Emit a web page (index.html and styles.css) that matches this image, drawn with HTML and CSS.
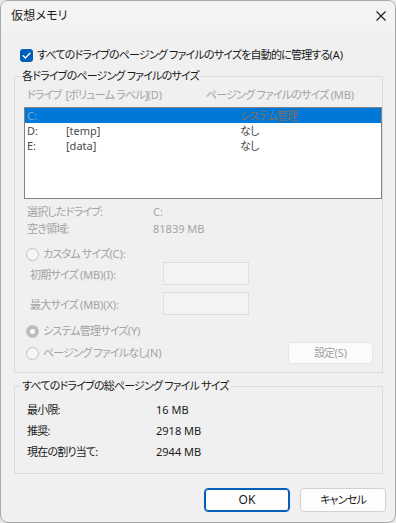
FILE: index.html
```html
<!DOCTYPE html>
<html lang="ja">
<head>
<meta charset="utf-8">
<link rel="stylesheet" href="styles.css">
</head>
<body>
<div class="window">
  <div class="titlebar">
    <span class="title">仮想メモリ</span>
    <span class="close">
      <svg width="10" height="10" viewBox="0 0 10 10"><path d="M0.5 0.5 L9.5 9.5 M9.5 0.5 L0.5 9.5" stroke="#1a1a1a" stroke-width="1.1" fill="none"/></svg>
    </span>
  </div>
  <div class="content">
    <div class="check-row">
      <span class="checkbox"><svg width="13" height="13" viewBox="0 0 13 13"><path d="M3.2 6.8 L5.4 9 L9.9 4.3" stroke="#fff" stroke-width="1.3" fill="none" stroke-linecap="round" stroke-linejoin="round"/></svg></span>
      <span>すべてのドライブのページング ファイルのサイズを自動的に管理する<span class="lat">(A)</span></span>
    </div>

    <fieldset class="group group1">
      <legend>各ドライブのページング ファイルのサイズ</legend>
      <div class="list-head">
        <span class="col1">ドライブ&nbsp;&nbsp;[ボリューム ラベル]<span class="lat">(D)</span></span>
        <span class="col3">ページング ファイルのサイズ <span class="lat">(MB)</span></span>
      </div>
      <div class="listbox">
        <div class="lrow selected"><span class="c1">C:</span><span class="c2"></span><span class="c3">システム管理</span></div>
        <div class="lrow"><span class="c1">D:</span><span class="c2 val">[temp]</span><span class="c3">なし</span></div>
        <div class="lrow"><span class="c1">E:</span><span class="c2 val">[data]</span><span class="c3">なし</span></div>
      </div>
      <div class="info">
        <div class="irow first"><span class="ilabel">選択したドライブ:</span><span class="val">C:</span></div>
        <div class="irow"><span class="ilabel">空き領域:</span><span class="val">81839 MB</span></div>
      </div>
      <div class="radio-row custom"><span class="radio"></span><span>カスタム サイズ<span class="lat">(C):</span></span></div>
      <div class="field-row first"><span class="flabel">初期サイズ <span class="lat">(MB)(I):</span></span><span class="input"></span></div>
      <div class="field-row"><span class="flabel">最大サイズ <span class="lat">(MB)(X):</span></span><span class="input"></span></div>
      <div class="radio-row sys"><span class="radio on"></span><span>システム管理サイズ<span class="lat">(Y)</span></span></div>
      <div class="radio-row none">
        <span class="radio"></span><span>ページング ファイルなし<span class="lat">(N)</span></span>
        <span class="btn set">設定<span class="lat">(S)</span></span>
      </div>
    </fieldset>

    <fieldset class="group group2">
      <legend>すべてのドライブの総ページング ファイル サイズ</legend>
      <div class="trow"><span class="tlabel">最小限:</span><span class="val">16 MB</span></div>
      <div class="trow"><span class="tlabel">推奨:</span><span class="val">2918 MB</span></div>
      <div class="trow"><span class="tlabel">現在の割り当て:</span><span class="val">2944 MB</span></div>
    </fieldset>

    <div class="buttons">
      <span class="btn ok val">OK</span>
      <span class="btn cancel">キャンセル</span>
    </div>
  </div>
</div>
</body>
</html>
```
FILE: styles.css
```css
* { box-sizing: border-box; }
html, body { margin: 0; padding: 0; background: #e8e8e8; }
body {
  font-family: "Noto Sans", "Noto Sans CJK JP", sans-serif;
  font-size: 11px;
  font-feature-settings: "palt";
  letter-spacing: -0.8px;
  color: #1a1a1a;
}
.val, .lat { letter-spacing: 0; font-size: 11px; }
.lat { letter-spacing: -0.1px; }
.window {
  width: 396px;
  height: 523px;
  border: 1px solid #a8a8a8;
  border-radius: 8px;
  background: #f0f0f0;
  overflow: hidden;
  display: flex;
  flex-direction: column;
}
.titlebar {
  height: 30px;
  background: #f3f3f3;
  display: flex;
  align-items: center;
  justify-content: space-between;
  padding: 0 9px 0 10px;
}
.title { line-height: 16px; font-size: 12px; letter-spacing: 0.2px; }
.close { width: 10px; height: 10px; display: flex; margin-top: -1px; }
.close svg { display: block; }
.content {
  padding: 0 12px 0 13px;
  display: flex;
  flex-direction: column;
}
.check-row {
  margin-top: 16px;
  height: 16px;
  display: flex;
  align-items: center;
  padding-left: 6px;
  line-height: 16px;
}
.checkbox {
  width: 13px; height: 13px;
  border-radius: 3px;
  background: #005fb8;
  display: inline-flex;
  margin-right: 4px;
}
.checkbox svg { display: block; }
.group {
  margin: 0;
  border: 1px solid #dcdcdc;
  min-width: 0;
}
.group legend {
  padding: 0 2px;
  line-height: 16px;
}
.group1 {
  margin-top: 5px;
  padding: 0 0 8px 9px;
}
.group1 legend { margin-left: -4px; }
.list-head {
  margin-top: 3px;
  height: 16px;
  line-height: 16px;
  display: flex;
  color: #a3a3a3;
  padding-left: 3px;
}
.list-head .col1 { width: 179px; }
.listbox {
  margin-top: 4px;
  height: 92px;
  border: 1px solid #828282;
  background: #fff;
}
.lrow {
  height: 15px;
  line-height: 15px;
  display: flex;
  color: #4a4a4a;
  padding-left: 2px;
}
.lrow.selected { background: #0078d7; }
.lrow.selected .c1 { color: #8aa6c4; }
.lrow.selected .c3 { color: #7d6e62; }
.lrow .c1 { width: 39px; letter-spacing: 0; }
.lrow .c2 { width: 174px; }
.info { margin-top: 4px; color: #a3a3a3; }
.irow { height: 17px; line-height: 17px; display: flex; padding-left: 3px; }
.ilabel { width: 126px; }
.radio-row {
  display: flex;
  align-items: center;
  color: #a3a3a3;
  padding-left: 2px;
  line-height: 16px;
}
.radio {
  width: 13px; height: 13px;
  border-radius: 50%;
  border: 1px solid #c2c2c2;
  background: #f6f6f6;
  margin-right: 4px;
  flex: none;
}
.radio.on {
  background: radial-gradient(circle, #f8f8f8 0 2.2px, #bdbdbd 2.8px);
  border-color: #bdbdbd;
}
.radio-row.custom { margin-top: 9px; height: 16px; }
.field-row {
  display: flex;
  align-items: center;
  height: 23px;
  margin-top: 7px;
  color: #a3a3a3;
  padding-left: 6px;
}
.field-row.first { margin-top: 0; }
.flabel { width: 133px; }
.input {
  width: 86px; height: 23px;
  border: 1px solid #dedede;
  background: #f3f3f3;
}
.radio-row.sys { margin-top: 8px; height: 16px; }
.radio-row.none { margin-top: 3px; height: 22px; }
.btn {
  display: flex;
  align-items: center;
  justify-content: center;
  border-radius: 4px;
  line-height: 16px;
}
.btn.set {
  margin-left: auto;
  margin-right: 9px;
  width: 85px; height: 22px;
  background: #fbfbfb;
  border: 1px solid #e6e6e6;
  color: #a0a0a0;
}
.group2 {
  margin-top: 5px;
  padding: 0 0 11px 12px;
}
.group2 legend { margin-left: -7px; }
.trow { display: flex; height: 20px; line-height: 20px; }
.trow:first-of-type { margin-top: 6px; }
.trow + .trow { margin-top: 1px; }
.tlabel { width: 129px; }
.buttons {
  margin-top: 14px;
  display: flex;
  justify-content: flex-end;
  gap: 10px;
  margin-right: -3px;
}
.btn.ok, .btn.cancel {
  width: 86px; height: 24px;
  background: #fdfdfd;
}
.btn.ok { border: 1px solid #005fb8; box-shadow: inset 0 0 0 1px #005fb8; font-size: 12px; }
.btn.cancel { border: 1px solid #d0d0d0; }
```
